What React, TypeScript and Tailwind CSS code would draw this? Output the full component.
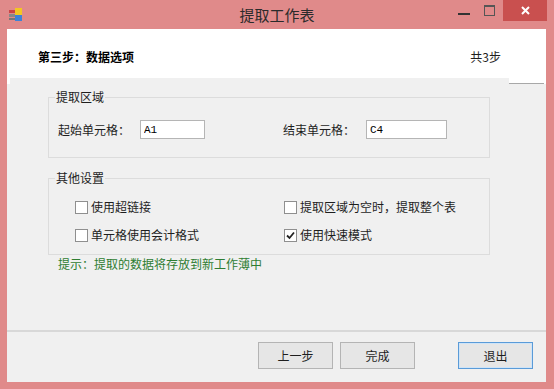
import { useState } from "react";

const cjk = "font-['Noto_Sans_CJK_SC','Noto_Sans',sans-serif]";

function CheckItem({ label, checked }: { label: string; checked?: boolean }) {
  const [on, setOn] = useState(!!checked);
  return (
    <label className="flex h-[16px] items-center cursor-default" onClick={() => setOn(!on)}>
      <span className="flex h-[13px] w-[13px] items-center justify-center border border-[#8f8f8f] bg-white">
        {on && (
          <svg width="9" height="9" viewBox="0 0 9 9">
            <path d="M1 4.5 L3.5 7 L8 1.5" fill="none" stroke="#222" strokeWidth="1.8" />
          </svg>
        )}
      </span>
      <span className="ml-[3px] text-[12px] leading-[16px] text-[#1e1e1e]">{label}</span>
    </label>
  );
}

function Button({ text, primary }: { text: string; primary?: boolean }) {
  return (
    <button
      className={
        "h-[27px] w-[75px] text-[12px] text-[#1e1e1e] bg-[#e6e6e6] border " +
        (primary ? "border-[#5a9bd8] shadow-[inset_0_0_0_1px_#cfe4f7]" : "border-[#b4b4b4]")
      }
    >
      {text}
    </button>
  );
}

export default function App() {
  const [start, setStart] = useState("A1");
  const [end, setEnd] = useState("C4");

  return (
    <div className={`flex h-[389px] w-[554px] flex-col bg-[#e08a8a] ${cjk}`}>
      {/* title bar */}
      <div className="grid h-[29px] grid-cols-[1fr_auto_1fr] items-center">
        <svg className="ml-[9px]" width="13" height="13" viewBox="0 0 13 13">
          <rect x="0" y="2" width="6" height="3" fill="#c44" />
          <rect x="0" y="6" width="6" height="3" fill="#888" />
          <rect x="0" y="10" width="6" height="2" fill="#777" />
          <rect x="6" y="0" width="7" height="7" fill="#f3c622" />
          <rect x="6" y="7" width="7" height="6" fill="#3e82d6" />
        </svg>
        <div className="text-center text-[15px] leading-[20px] text-[#2b2b2b]">提取工作表</div>
        <div className="flex h-full items-start justify-end">
          <div className="mt-[13px] h-[2px] w-[12px] bg-[#333]" />
          <div className="ml-[14px] mt-[5px] h-[11px] w-[11px] border border-[#555] border-t-2" />
          <div className="ml-[8px] flex h-[21px] w-[44px] items-center justify-center bg-[#c9504f]">
            <svg width="9" height="9" viewBox="0 0 9 9">
              <path d="M1 1 L8 8 M8 1 L1 8" stroke="#fff" strokeWidth="2" />
            </svg>
          </div>
          <div className="w-[7px]" />
        </div>
      </div>

      {/* body */}
      <div className="mx-[7px] mb-[7px] flex flex-1 flex-col bg-[#f0f0f0] w-[539px]">
        {/* header */}
        <div className="flex h-[49px] items-start justify-between bg-white pl-[31px] pr-[45px] pt-[20px]">
          <span className="text-[12px] font-bold leading-[16px] text-black">第三步：数据选项</span>
          <span className="text-[12px] leading-[16px] text-[#1e1e1e]">共3步</span>
        </div>
        <div className="flex h-[6px]">
          <div className="w-[3px] bg-white" />
          <div className="flex-1 bg-[#f0f0f0]" />
          <div className="w-[35px] border-b border-[#a8a8a8] bg-white" />
          <div className="w-[2px] bg-white" />
        </div>

        {/* 提取区域 */}
        <fieldset className="ml-[41px] mt-[5px] w-[442px] border border-[#dcdcdc]">
          <legend className="ml-[6px] px-[1px] text-[12px] leading-[16px] text-[#1e1e1e]">提取区域</legend>
          <div className="flex items-center pl-[9px] pt-[15px] pb-[18px] text-[12px] text-[#1e1e1e]">
            <span className="w-[82px] leading-[16px]">起始单元格：</span>
            <input
              value={start}
              onChange={(e) => setStart(e.target.value)}
              className="h-[19px] w-[65px] border border-[#b5b5b5] bg-white px-[3px] font-['Liberation_Mono',monospace] text-[11px] text-black outline-none"
            />
            <span className="ml-[78px] w-[83px] leading-[16px]">结束单元格：</span>
            <input
              value={end}
              onChange={(e) => setEnd(e.target.value)}
              className="h-[19px] w-[81px] border border-[#b5b5b5] bg-white px-[3px] font-['Liberation_Mono',monospace] text-[11px] text-black outline-none"
            />
          </div>
        </fieldset>

        {/* 其他设置 */}
        <fieldset className="ml-[41px] mt-[12px] w-[442px] border border-[#dcdcdc]">
          <legend className="ml-[6px] px-[1px] text-[12px] leading-[16px] text-[#1e1e1e]">其他设置</legend>
          <div className="grid grid-cols-[209px_1fr] gap-y-[12px] pl-[26px] pt-[13px] pb-[11px]">
            <CheckItem label="使用超链接" />
            <CheckItem label="提取区域为空时，提取整个表" />
            <CheckItem label="单元格使用会计格式" />
            <CheckItem label="使用快速模式" checked />
          </div>
        </fieldset>

        <div className="pl-[51px] pt-[1px] text-[12px] leading-[16px] text-[#2e7d32]">提示：提取的数据将存放到新工作薄中</div>

        <div className="flex-1" />

        {/* footer */}
        <div className="border-t-2 border-[#d8d8d8]" />
        <div className="flex justify-end pr-[13px] pt-[10px] pb-[13px]">
          <Button text="上一步" />
          <div className="w-[7px]" />
          <Button text="完成" />
          <div className="w-[43px]" />
          <Button text="退出" primary />
        </div>
      </div>
    </div>
  );
}
